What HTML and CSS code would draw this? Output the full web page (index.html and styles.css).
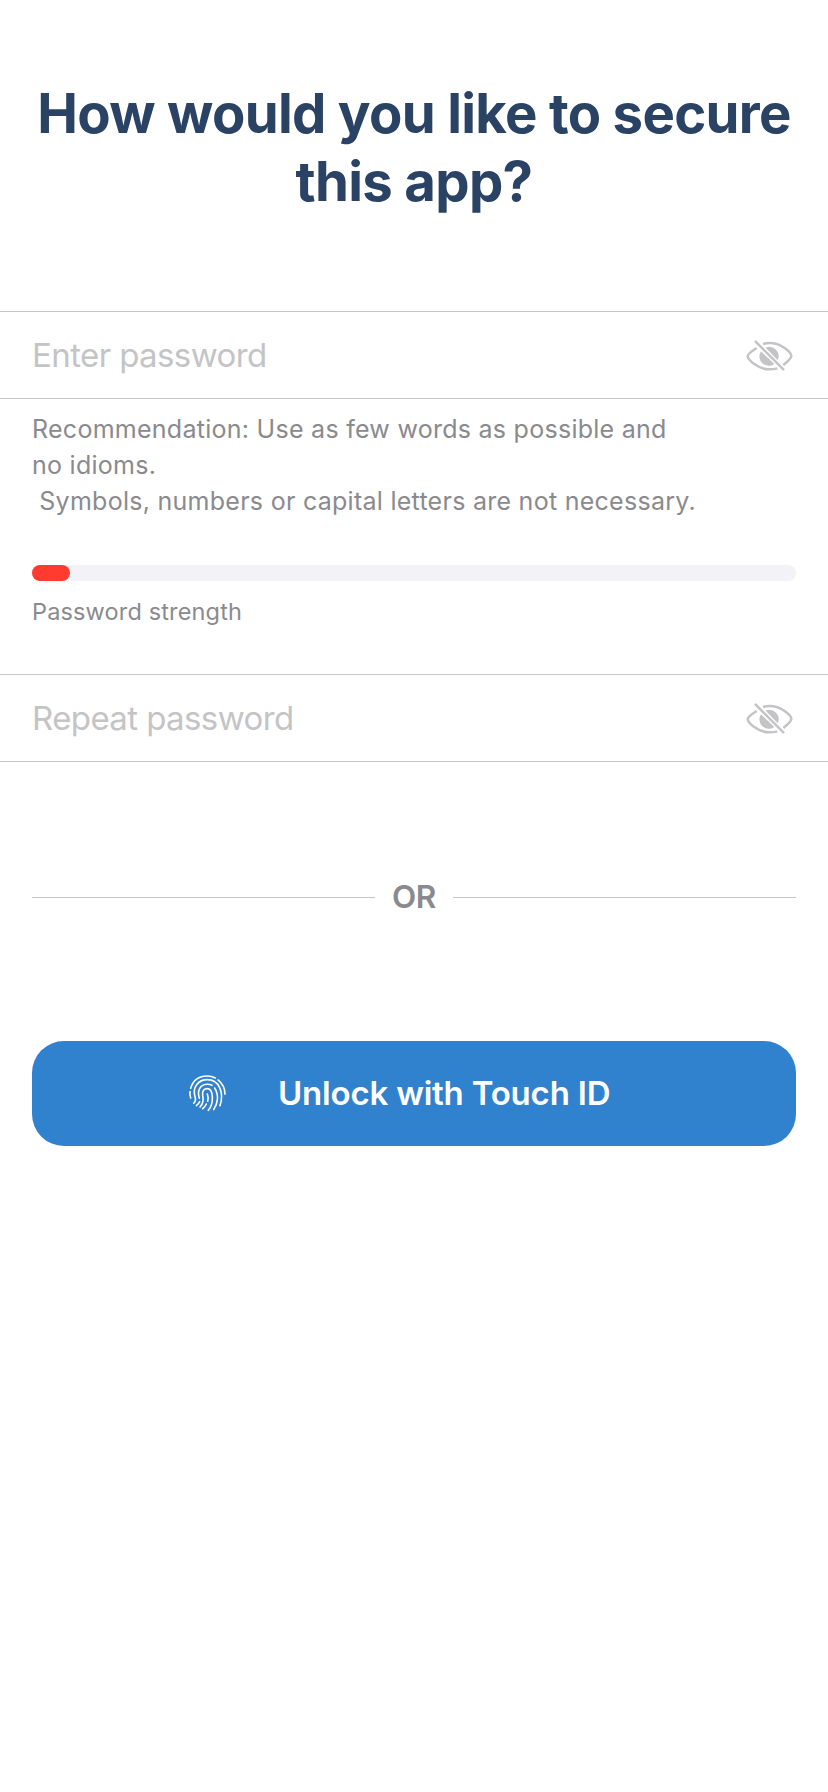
FILE: index.html
```html
<!DOCTYPE html>
<html lang="en">
<head>
<meta charset="utf-8">
<meta name="viewport" content="width=device-width">
<title>Secure this app</title>
<link rel="stylesheet" href="styles.css">
</head>
<body>
<svg class="defs" aria-hidden="true">
  <symbol id="eye-off" viewBox="0 0 240 180">
    <g fill="none" stroke="currentColor" stroke-width="7.5" stroke-linecap="butt">
      <path d="M99 57Q109 54 118 54C155 54 184 83 184 93Q184 101 160 120"/>
      <path d="M80 69Q53 86 53 93C53 104 84 133 119 133Q131 133 142 130"/>
      <path stroke-linecap="round" d="M77 50L160 133"/>
    </g>
    <path fill="currentColor" d="M107 68A28 28 0 0 1 143 106ZM93 79A28 28 0 0 0 133 117Z"/>
  </symbol>
</svg>
<main class="screen">
  <h1 class="title">How would you like to secure<br>this app?</h1>
  <section class="field">
    <span class="placeholder enter">Enter password</span>
    <svg class="eye"><use href="#eye-off"/></svg>
  </section>
  <p class="hint">Recommendation: Use as few words as possible and<br>no idioms.<br>&nbsp;Symbols, numbers or capital letters are not necessary.</p>
  <div class="meter"><div class="meter-fill"></div></div>
  <p class="strength">Password strength</p>
  <section class="field">
    <span class="placeholder repeat">Repeat password</span>
    <svg class="eye"><use href="#eye-off"/></svg>
  </section>
  <div class="divider"><span class="or">OR</span></div>
  <button class="unlock">
    <svg class="finger" viewBox="54 59 117 115" fill="none" stroke="#fff" stroke-width="4.8" stroke-linecap="round">
      <path d="M62 102C69 78 88 65 112 65Q125 65 136 71"/>
      <path d="M144 77C159 89 165 104 165 120"/>
      <path d="M60 112Q59 122 62 131"/>
      <path d="M71 147Q79 139 75 127C66 99 85 76 112 76C148 76 163 116 150 154"/>
      <path d="M88 132C81 111 89 90 112 90Q120 90 126 93"/>
      <path d="M134 101C148 123 143 149 131 166"/>
      <path d="M90 158Q103 145 98 124C95 108 104 103 112 103C130 103 133 147 115 168"/>
      <path d="M79 154Q86 149 89 142"/>
      <path d="M98 163Q106 156 109 149"/>
      <path d="M112 119Q116 130 113 141"/>
    </svg>
    <span class="unlock-label">Unlock with Touch ID</span>
  </button>
</main>
</body>
</html>
```
FILE: styles.css
```css
* { box-sizing: border-box; }
body { margin: 0; background: #fff; font-family: Inter, "Liberation Sans", sans-serif; }
.defs { position: absolute; width: 0; height: 0; }
.screen { display: flex; flex-direction: column; width: 828px; min-height: 1792px; padding-top: 79px; }
.title { margin: 0; height: 232px; text-align: center; color: #2a4365; font-size: 54.5px; line-height: 68px; font-weight: 700; letter-spacing: -0.7px; white-space: nowrap; }
.field { display: flex; align-items: center; justify-content: space-between; height: 88px; padding: 0 18px 0 32px; border: solid #c6c6c8; border-width: 1px 0; color: #c4c4c6; }
.placeholder { font-size: 33px; line-height: 40px; }
.enter { letter-spacing: -0.6px; }
.repeat { letter-spacing: -0.6px; }
.eye { width: 80px; height: 60px; }
.hint { margin: 12px 0 0 32px; color: #8a8a8e; font-size: 25px; line-height: 36px; letter-spacing: 0.27px; white-space: nowrap; }
.meter { height: 16px; margin: 46px 32px 0; border-radius: 8px; background: #f2f2f7; }
.meter-fill { width: 38px; height: 16px; border-radius: 8px; background: #ff3b30; }
.strength { margin: 15px 32px 47px; color: #8a8a8e; font-size: 23.5px; line-height: 31px; letter-spacing: 0.15px; }
.divider { display: flex; align-items: center; gap: 17px; height: 40px; margin: 115px 32px 0; color: #8a8a8e; }
.divider::before, .divider::after { content: ""; flex: 1; height: 1px; background: #c6c6c8; }
.or { font-size: 31.5px; line-height: 40px; font-weight: 600; letter-spacing: -0.3px; }
.unlock { display: flex; align-items: center; height: 105px; margin: 124px 32px 0; padding: 0 0 0 156px; border: 0; border-radius: 32px; background: #3182ce; color: #fff; font-family: inherit; }
.finger { width: 39px; height: 38.3px; flex: none; }
.unlock-label { margin-left: 51px; padding-bottom: 2px; font-size: 33px; line-height: 40px; font-weight: 600; letter-spacing: -0.2px; white-space: nowrap; }
```
